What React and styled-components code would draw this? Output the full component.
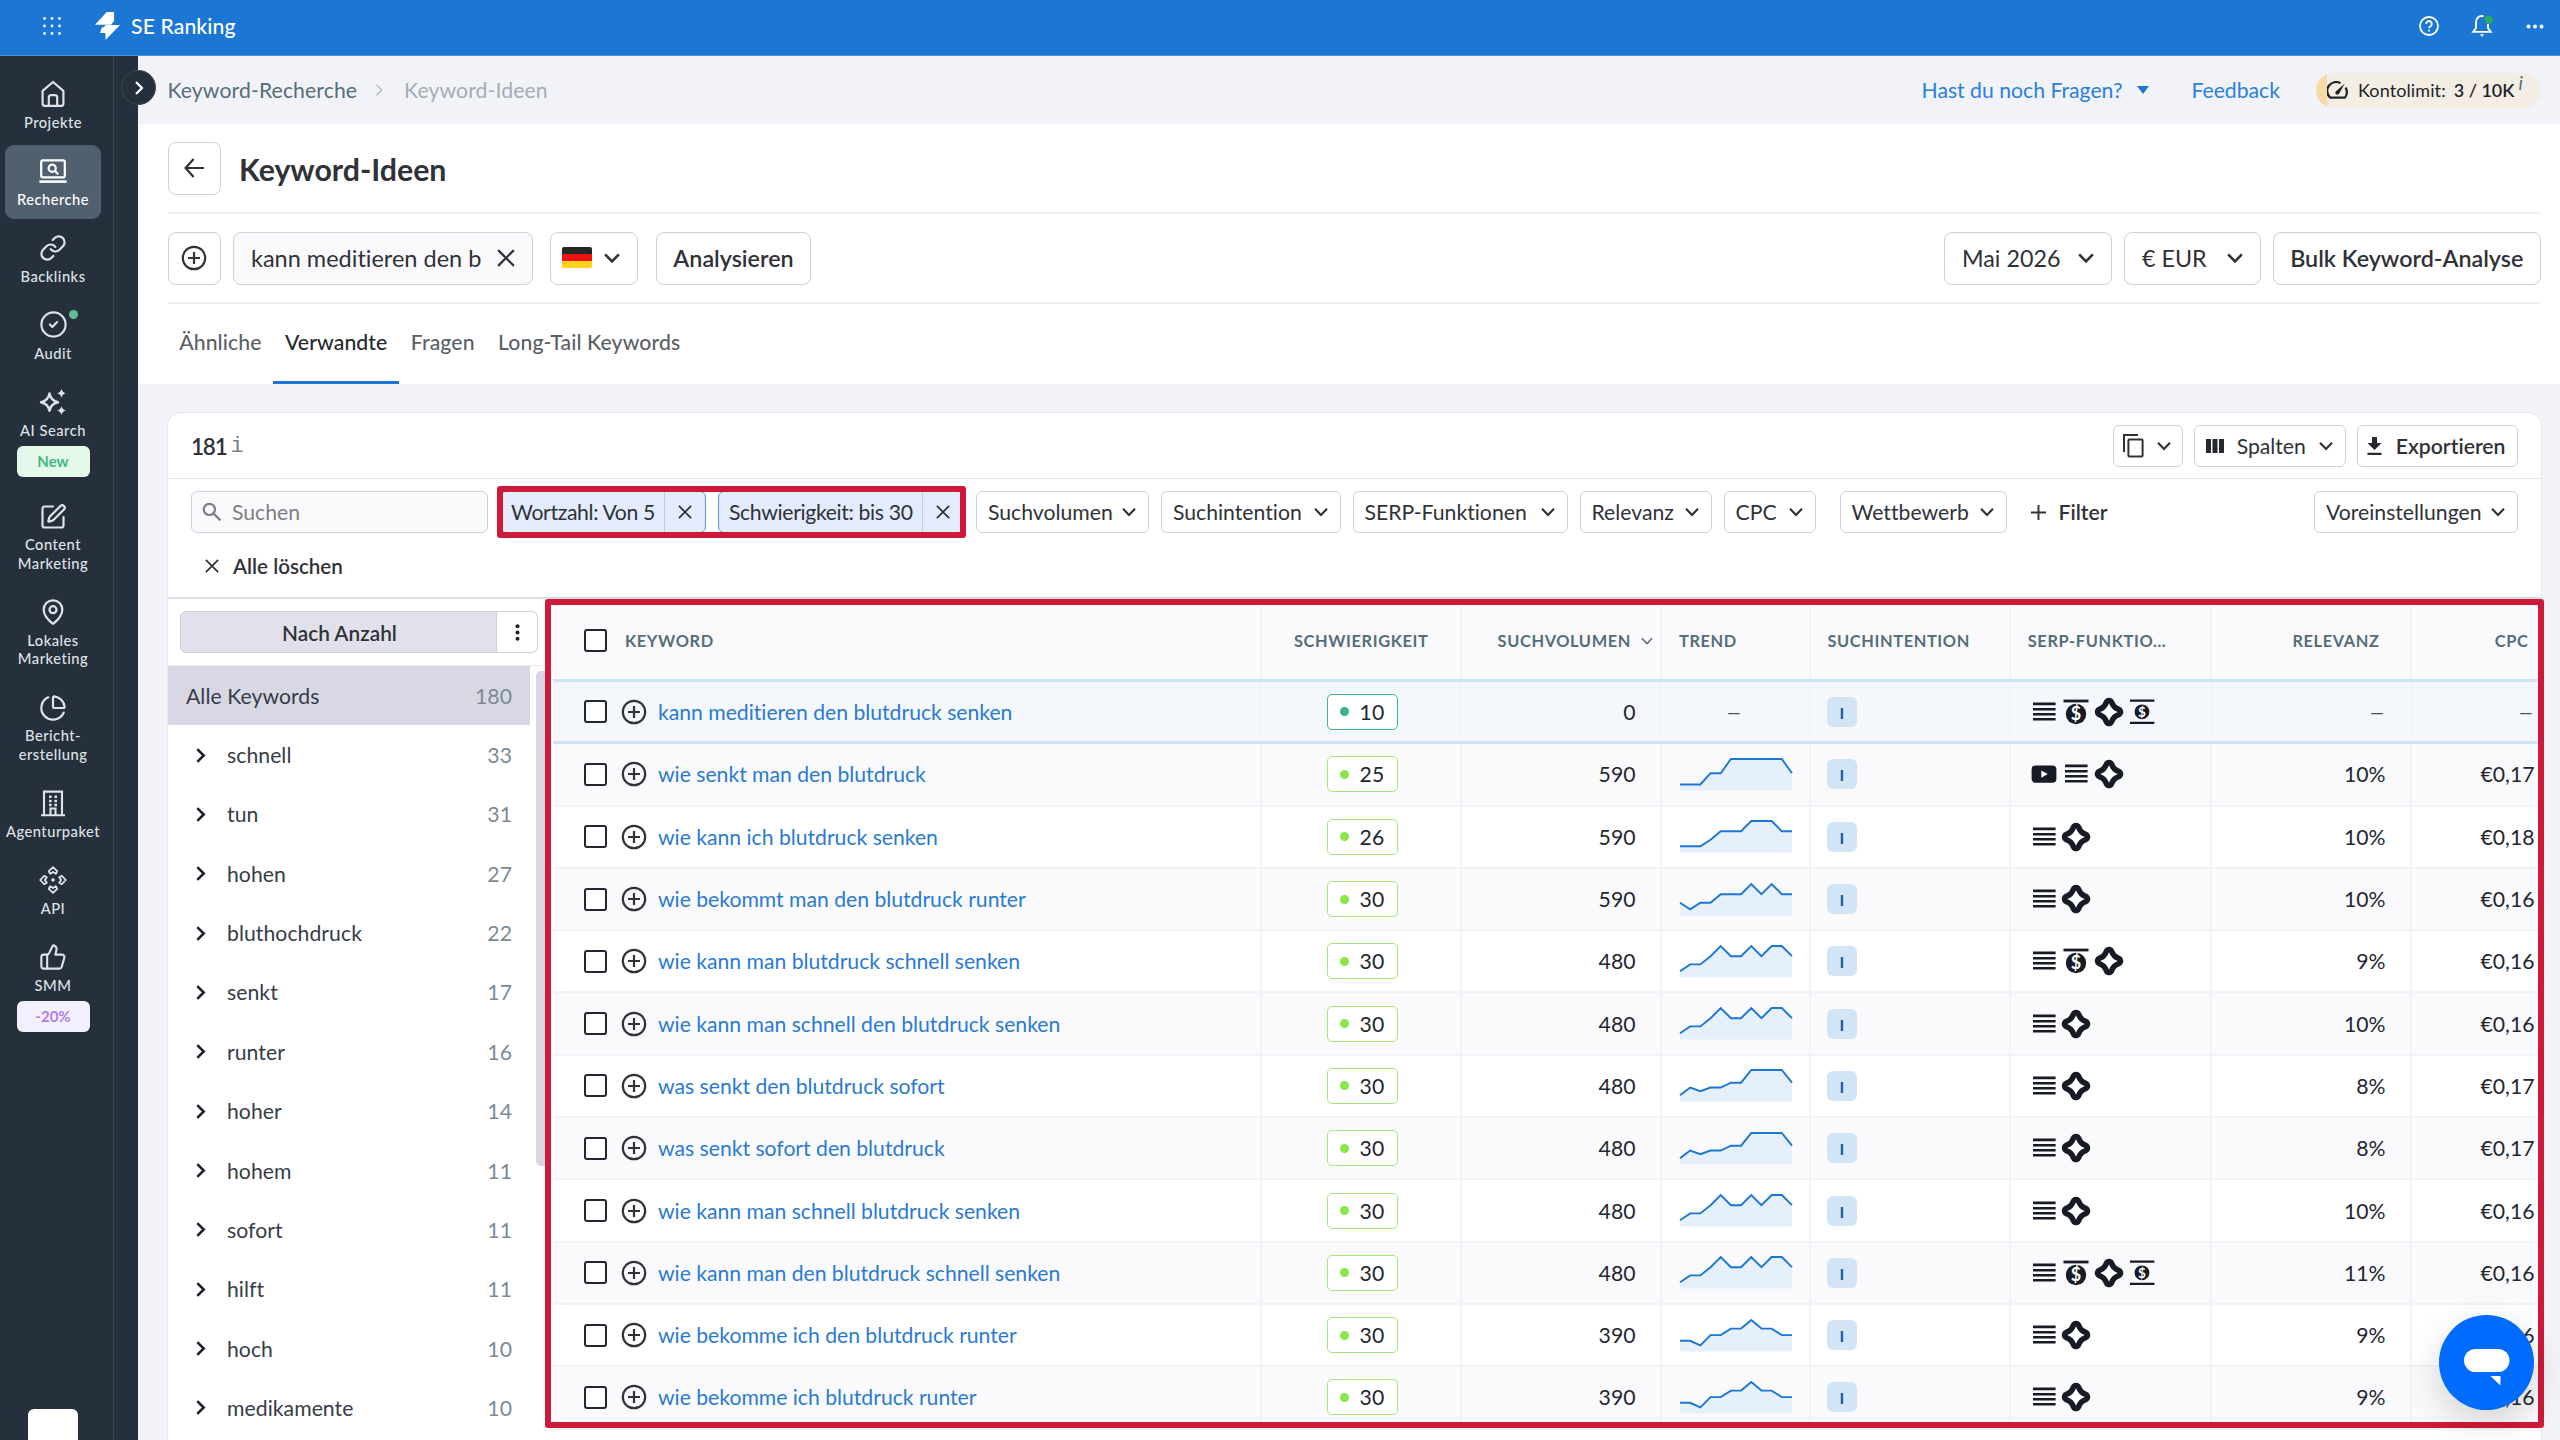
import React from 'react';
import styled, { createGlobalStyle, css } from 'styled-components';
import { Link, CircleCheck, MapPin, ChartPie, ThumbsUp, SquarePen } from 'lucide-react';

//Styles
const colors = {
	topBar: '#1b76d4',
	dark: '#26303c',
	darkActive: '#51606f',
	page: '#f2f3f8',
	line: '#f0f0f6',
	border: '#cfcfdc',
	text: '#2f3237',
	slate: '#546e7a',
	link: '#2a7ad2',
	red: '#ce1a3a',
	blueLine: '#cfe2f6',
};

const GlobalStyle = createGlobalStyle`
	* { box-sizing: border-box; }
	body {
		margin: 0;
		overflow: hidden;
		font-family: Lato, "Noto Sans", sans-serif;
		font-variant-ligatures: none;
		font-size: 21.2px;
		color: ${colors.text};
		background: ${colors.page};
	}
	svg { display: block; flex: none; }
`;

//Data
const keywords = [
	['kann meditieren den blutdruck senken', 10, '0', null, 'ltsb', '–', '–'],
	['wie senkt man den blutdruck', 25, '590', [25.5, 25.5, 25.5, 14.2, 14.2, 0, 0, 0, 0, 0, 0, 14.2], 'yls', '10%', '€0,17'],
	['wie kann ich blutdruck senken', 26, '590', [25.3, 25.3, 25.3, 18.8, 10.2, 10.2, 10.2, 0, 0, 0, 10.2, 10.2], 'ls', '10%', '€0,18'],
	['wie bekommt man den blutdruck runter', 30, '590', [18.8, 25.3, 18.8, 18.8, 10.2, 10.2, 10.2, 0, 10.2, 0, 10.2, 10.2], 'ls', '10%', '€0,16'],
	['wie kann man blutdruck schnell senken', 30, '480', [25.3, 18.4, 18.4, 10.2, 0, 10.2, 10.2, 0, 10.2, 0, 0, 10.2], 'lts', '9%', '€0,16'],
	['wie kann man schnell den blutdruck senken', 30, '480', [25.3, 18.4, 18.4, 10.2, 0, 10.2, 10.2, 0, 10.2, 0, 0, 10.2], 'ls', '10%', '€0,16'],
	['was senkt den blutdruck sofort', 30, '480', [25.3, 17.5, 21.2, 17.5, 17.5, 12.7, 12.7, 0, 0, 0, 0, 12.7], 'ls', '8%', '€0,17'],
	['was senkt sofort den blutdruck', 30, '480', [25.3, 17.5, 21.2, 17.5, 17.5, 12.7, 12.7, 0, 0, 0, 0, 12.7], 'ls', '8%', '€0,17'],
	['wie kann man schnell blutdruck senken', 30, '480', [25.3, 18.4, 18.4, 10.2, 0, 10.2, 10.2, 0, 10.2, 0, 0, 10.2], 'ls', '10%', '€0,16'],
	['wie kann man den blutdruck schnell senken', 30, '480', [25.3, 18.4, 18.4, 10.2, 0, 10.2, 10.2, 0, 10.2, 0, 0, 10.2], 'ltsb', '11%', '€0,16'],
	['wie bekomme ich den blutdruck runter', 30, '390', [20.8, 20.8, 25.3, 15.1, 15.1, 8.6, 8.6, 0, 8.6, 8.6, 15.1, 15.1], 'ls', '9%', '€0,16'],
	['wie bekomme ich blutdruck runter', 30, '390', [20.8, 20.8, 25.3, 15.1, 15.1, 8.6, 8.6, 0, 8.6, 8.6, 15.1, 15.1], 'ls', '9%', '€0,16'],
];

const groups = [
	['schnell', 33],
	['tun', 31],
	['hohen', 27],
	['bluthochdruck', 22],
	['senkt', 17],
	['runter', 16],
	['hoher', 14],
	['hohem', 11],
	['sofort', 11],
	['hilft', 11],
	['hoch', 10],
	['medikamente', 10],
];

//Icons
const Chevron = ({ size = 14, stroke = 2.2, dir = 'down', color = 'currentColor' }) => (
	<svg width={size} height={size} viewBox="0 0 14 14" fill="none" stroke={color} strokeWidth={stroke}>
		<path d={dir === 'down' ? 'M1 3.8 7 10l6-6.2' : 'M4 1l6 6-6 6'} />
	</svg>
);

const Cross = ({ size = 17, stroke = 2 }) => (
	<svg width={size} height={size} viewBox="0 0 16 16" fill="none" stroke="#2f3237" strokeWidth={stroke}>
		<path d="M1 1l14 14M15 1L1 15" />
	</svg>
);

const PlusCircle = () => (
	<svg width="26" height="26" viewBox="0 0 26 26" fill="none" stroke="#2f3237" strokeWidth="2.2">
		<circle cx="13" cy="13" r="11.2" />
		<path d="M13 7v12M7 13h12" />
	</svg>
);

const HomeIcon = () => (
	<svg width="28" height="28" viewBox="0 0 28 28" fill="none" stroke="currentColor" strokeWidth="2.2" strokeLinejoin="round">
		<path d="M3.6 10.8 14 2l10.4 8.8v13a2 2 0 0 1-2 2H5.6a2 2 0 0 1-2-2z" />
		<path d="M9.8 25.6v-8a2.4 2.4 0 0 1 2.4-2.4h3.6a2.4 2.4 0 0 1 2.4 2.4v8" />
	</svg>
);

const ResearchIcon = () => (
	<svg width="28" height="28" viewBox="0 0 28 28" fill="none" stroke="currentColor" strokeWidth="2.2">
		<rect x="2.2" y="3.4" width="23.6" height="17" rx="1.6" />
		<path d="M.4 24.6h27.2" strokeWidth="2.6" />
		<circle cx="13.2" cy="11.2" r="3.6" />
		<path d="M15.8 13.8l3.4 3.4" />
	</svg>
);

const AiIcon = () => (
	<svg width="28" height="28" viewBox="0 0 28 28" fill="currentColor">
		<path d="M10.5 5.5Q11.8 12.8 19 14.2Q11.8 15.6 10.5 22.8Q9.2 15.6 2 14.2Q9.2 12.8 10.5 5.5z" fill="none" stroke="currentColor" strokeWidth="2.4" strokeLinejoin="round" />
		<path d="M22.5 .8q.8 3.7 4.5 4.5q-3.7 .8-4.5 4.5q-.8-3.7-4.5-4.5q3.7-.8 4.5-4.5z" />
		<path d="M22.5 18q.8 3.7 4.5 4.5q-3.7 .8-4.5 4.5q-.8-3.7-4.5-4.5q3.7-.8 4.5-4.5z" />
	</svg>
);

const AgencyIcon = () => (
	<svg width="28" height="28" viewBox="0 0 28 28" fill="none" stroke="currentColor" strokeWidth="2.1">
		<path d="M5 26V2.6h18V26M2 26.2h24M11.5 26v-6.5h5V26" />
		<path d="M10 7.8h2.6M15.4 7.8H18M10 12h2.6M15.4 12H18M10 16h2.6M15.4 16H18" strokeWidth="2.4" />
	</svg>
);

const ApiIcon = () => (
	<svg width="30" height="30" viewBox="0 0 30 30" fill="none" stroke="currentColor" strokeWidth="1.8" strokeLinejoin="round">
		{[0, 90, 180, 270].map((a) => (
			<path key={a} transform={`rotate(${a} 15 15)`} d="M10.8 6.2 15 2.2l4.2 4-1.4 2.6L15 6.9l-2.8 1.9z" />
		))}
		<circle cx="15" cy="15" r="1.8" fill="currentColor" stroke="none" />
	</svg>
);

const SearchIcon = () => (
	<svg width="20" height="20" viewBox="0 0 20 20" fill="none" stroke="#7d7f86" strokeWidth="2.2">
		<circle cx="7.4" cy="7.4" r="5.6" />
		<path d="M11.6 11.6l6.8 6.8" />
	</svg>
);

const ListIcon = () => (
	<svg width="28" height="30" viewBox="0 0 28 30" fill="#161b26">
		<path d="M3 5.6h22.6v2.6H3zM3 11h22.6v2.6H3zM3 16h22.6v2.6H3zM3 21h22.6v2.6H3z" />
	</svg>
);

const TopAdsIcon = () => (
	<svg width="28" height="30" viewBox="0 0 28 30">
		<path d="M1.5 2.6h25v2.8h-25z" fill="#161b26" />
		<circle cx="14" cy="17" r="10.2" fill="#161b26" />
		<text x="14" y="23.4" textAnchor="middle" fontSize="18" fontWeight="700" fill="#fff">$</text>
	</svg>
);

const BottomAdsIcon = () => (
	<svg width="28" height="30" viewBox="0 0 28 30">
		<path d="M2 2.6h24.4v2.2H2zM2 24.8h24.4V27H2z" fill="#161b26" />
		<circle cx="14" cy="14.8" r="7.4" fill="#161b26" />
		<text x="14" y="19.6" textAnchor="middle" fontSize="13.5" fontWeight="700" fill="#fff">$</text>
	</svg>
);

const starPath = 'M14 6.2Q16.3 12.7 22.8 15Q16.3 17.3 14 23.8Q11.7 17.3 5.2 15Q11.7 12.7 14 6.2z';

const OverviewIcon = () => (
	<svg width="28" height="30" viewBox="0 0 28 30" overflow="visible">
		<path d={starPath} fill="#161b26" stroke="#161b26" strokeWidth="11" strokeLinejoin="round" />
		<path d={starPath} fill="#fff" />
	</svg>
);

const VideoIcon = () => (
	<svg width="28" height="30" viewBox="0 0 28 30">
		<rect x="1.6" y="6.4" width="24.8" height="17.4" rx="4" fill="#161b26" />
		<path d="M11.3 11.5v7.2l6.4-3.6z" fill="#fff" />
	</svg>
);

const serpIcons = { l: ListIcon, t: TopAdsIcon, s: OverviewIcon, b: BottomAdsIcon, y: VideoIcon };

function Trend({ points }) {
	const coords = points.map((p, i) => `${(i * 112) / 11},${p + 1}`);
	return (
		<svg width="112" height="33" viewBox="0 0 112 33" overflow="visible">
			<path d={`M0,32.5L${coords.join('L')}L112,32.5z`} fill="#e6f0fa" />
			<path d={`M${coords.join('L')}`} fill="none" stroke="#1b76d4" strokeWidth="1.9" />
		</svg>
	);
}

function TopBar() {
	return (
		<TopBarWrapper>
			<svg width="18" height="18" viewBox="0 0 18 18" fill="#fff">
				{[1.5, 9, 16.5].map((x) => [1.5, 9, 16.5].map((y) => <circle key={`${x}-${y}`} cx={x} cy={y} r="1.4" />))}
			</svg>
			<Brand>
				<svg width="25" height="28" viewBox="0 0 25 28" fill="#fff">
					<path d="M12.5 0h5.8q.8 0 .8 .8v8.2l-3 3.8H0L11 .8q.7-.8 1.5-.8z" />
					<path d="M7 15.2h1.5L11 13h14L10.5 28v-7H5z" />
				</svg>
				SE Ranking
			</Brand>
			<TopBarActions>
				<svg width="20" height="20" viewBox="0 0 20 20" fill="none" stroke="#fff" strokeWidth="1.8">
					<circle cx="10" cy="10" r="9" />
					<path d="M7.2 7.9a2.8 2.8 0 1 1 4.3 2.3c-.9.6-1.5 1-1.5 2.1M10 13.7v1.9" />
				</svg>
				<svg width="24" height="24" viewBox="0 0 24 24" fill="none" stroke="#fff" strokeWidth="1.9">
					<path d="M13.5 2.2C8.5 1.2 6 4.5 6 8.5v5.5L3.2 17.9h17.6L18 14v-4" />
					<path d="M10 20.2h4l-2 2.8z" fill="#fff" stroke="none" />
					<circle cx="18.8" cy="5.8" r="4.2" fill="#25ae60" stroke="none" />
				</svg>
				<svg width="18" height="5" viewBox="0 0 18 5" fill="#fff">
					<circle cx="2.5" cy="2.5" r="2" />
					<circle cx="9" cy="2.5" r="2" />
					<circle cx="15.5" cy="2.5" r="2" />
				</svg>
			</TopBarActions>
		</TopBarWrapper>
	);
}

const navItems = [
	{ label: ['Projekte'], icon: <HomeIcon /> },
	{ label: ['Recherche'], icon: <ResearchIcon />, active: true },
	{ label: ['Backlinks'], icon: <Link size={28} strokeWidth={1.9} /> },
	{ label: ['Audit'], icon: <CircleCheck size={29} strokeWidth={1.8} />, dot: true },
	{ label: ['AI Search'], icon: <AiIcon />, badge: 'New', tone: 'green' },
	{ label: ['Content', 'Marketing'], icon: <SquarePen size={28} strokeWidth={1.9} /> },
	{ label: ['Lokales', 'Marketing'], icon: <MapPin size={28} strokeWidth={1.9} /> },
	{ label: ['Bericht-', 'erstellung'], icon: <ChartPie size={28} strokeWidth={1.9} /> },
	{ label: ['Agenturpaket'], icon: <AgencyIcon /> },
	{ label: ['API'], icon: <ApiIcon /> },
	{ label: ['SMM'], icon: <ThumbsUp size={28} strokeWidth={1.8} />, badge: '-20%', tone: 'violet' },
];

function Sidebar() {
	return (
		<SidebarWrapper>
			<Nav>
				{navItems.map((item) => (
					<NavItem key={item.label.join('')} $active={item.active}>
						<NavIcon>
							{item.icon}
							{item.dot && <NavDot />}
						</NavIcon>
						{item.label.map((l) => (
							<NavLabel key={l}>{l}</NavLabel>
						))}
						{item.badge && <NavBadge $tone={item.tone}>{item.badge}</NavBadge>}
					</NavItem>
				))}
				<NavFooterBox />
			</Nav>
			<SidebarToggle>
				<Chevron dir="right" size={14} color="#fff" />
			</SidebarToggle>
		</SidebarWrapper>
	);
}

function PageHeader() {
	return (
		<React.Fragment>
			<Breadcrumbs>
				<Crumb>Keyword-Recherche</Crumb>
				<Chevron dir="right" size={12} stroke={1.6} color="#b4bac2" />
				<Crumb $muted>Keyword-Ideen</Crumb>
				<CrumbLinks>
					<HelpLink>
						Hast du noch Fragen?
						<svg width="12" height="8" viewBox="0 0 12 8" fill="#1b76d4">
							<path d="M0 0h12L6 8z" />
						</svg>
					</HelpLink>
					<HelpLink>Feedback</HelpLink>
					<LimitPill>
						<svg width="21" height="19" viewBox="0 0 21 19" fill="none" stroke="#1f242b" strokeWidth="2.2">
							<path d="M13.5 2.2A8.9 8.9 0 0 0 3.2 16.6h14.6A8.9 8.9 0 0 0 18.6 6.6" />
							<path d="M8.7 10.5 17.8 2.6 12 12.8a2 2 0 1 1-3.3-2.3z" fill="#1f242b" stroke="none" />
						</svg>
						<span>Kontolimit:</span>
						<b>3 / 10K</b>
						<LimitInfo>i</LimitInfo>
					</LimitPill>
				</CrumbLinks>
			</Breadcrumbs>
			<HeaderPanel>
				<TitleRow>
					<Button $w={53.5} $large>
						<svg width="20" height="20" viewBox="0 0 20 20" fill="none" stroke="#2f3237" strokeWidth="2.2">
							<path d="M20 10H1.6M9.6 1 1.6 10l8 9" />
						</svg>
					</Button>
					<Title>Keyword-Ideen</Title>
				</TitleRow>
				<QueryRow>
					<Button $w={53.5} $large>
						<PlusCircle />
					</Button>
					<QueryInput>
						<QueryText>kann meditieren den b</QueryText>
						<Cross size={18} />
					</QueryInput>
					<Button $w={88} $large $between>
						<Flag />
						<Chevron size={16} />
					</Button>
					<Button $w={155} $large $medium>
						Analysieren
					</Button>
					<Spacer />
					<Button $w={168} $large $between>
						Mai 2026
						<Chevron size={16} />
					</Button>
					<Button $w={136.5} $large $between>
						€ EUR
						<Chevron size={16} />
					</Button>
					<Button $w={268.5} $large $medium>
						Bulk Keyword-Analyse
					</Button>
				</QueryRow>
				<Tabs>
					<Tab>Ähnliche</Tab>
					<Tab $active>Verwandte</Tab>
					<Tab>Fragen</Tab>
					<Tab>Long-Tail Keywords</Tab>
				</Tabs>
			</HeaderPanel>
		</React.Fragment>
	);
}

function Filters() {
	return (
		<FiltersWrapper>
			<FilterRow>
				<SearchInput>
					<SearchIcon />
					Suchen
				</SearchInput>
				<ChipGroup>
					<Chip $w={206}>
						<ChipText>Wortzahl: Von 5</ChipText>
						<ChipClose>
							<Cross size={14} />
						</ChipClose>
					</Chip>
					<Chip $w={246}>
						<ChipText>Schwierigkeit: bis 30</ChipText>
						<ChipClose>
							<Cross size={14} />
						</ChipClose>
					</Chip>
				</ChipGroup>
				{[
					['Suchvolumen', 173],
					['Suchintention', 179.5],
					['SERP-Funktionen', 215],
					['Relevanz', 132],
					['CPC', 92],
				].map(([label, w]) => (
					<Button key={label} $w={w} $between>
						{label}
						<Chevron />
					</Button>
				))}
				<WideGap />
				<Button $w={167} $between>
					Wettbewerb
					<Chevron />
				</Button>
				<AddFilter>
					<svg width="15" height="15" viewBox="0 0 15 15" fill="none" stroke="#2f3237" strokeWidth="1.9">
						<path d="M7.5 0v15M0 7.5h15" />
					</svg>
					Filter
				</AddFilter>
				<Spacer />
				<Button $w={203.5} $between>
					Voreinstellungen
					<Chevron />
				</Button>
			</FilterRow>
			<ClearAll>
				<Cross size={14} />
				Alle löschen
			</ClearAll>
		</FiltersWrapper>
	);
}

function GroupPanel() {
	return (
		<GroupPanelWrapper>
			<GroupHead>
				<GroupSwitch>Nach Anzahl</GroupSwitch>
				<GroupMore>
					<svg width="5" height="17" viewBox="0 0 5 17" fill="#1f2329">
						<circle cx="2.5" cy="2.2" r="2" />
						<circle cx="2.5" cy="8.5" r="2" />
						<circle cx="2.5" cy="14.8" r="2" />
					</svg>
				</GroupMore>
			</GroupHead>
			<GroupBody>
				<GroupList>
					<GroupItem $active>
						Alle Keywords
						<GroupCount>180</GroupCount>
					</GroupItem>
					{groups.map(([name, count]) => (
						<GroupItem key={name}>
							<Chevron dir="right" size={15} stroke={2.4} color="#1a1f2b" />
							<GroupName>{name}</GroupName>
							<GroupCount>{count}</GroupCount>
						</GroupItem>
					))}
				</GroupList>
				<ScrollThumb />
			</GroupBody>
		</GroupPanelWrapper>
	);
}

function KeywordTable() {
	return (
		<TableWrapper>
			<TableHead>
				<Cell $pad={30.5} $gap={18.5}>
					<Checkbox />
					<span>Keyword</span>
				</Cell>
				<Cell $align="center">Schwierigkeit</Cell>
				<Cell $align="flex-end" $padRight={7.5} $gap={10}>
					Suchvolumen
					<Chevron size={12} stroke={1.8} />
				</Cell>
				<Cell $pad={16.5}>Trend</Cell>
				<Cell $pad={16.5}>Suchintention</Cell>
				<Cell $pad={16.5}>SERP-Funktio…</Cell>
				<Cell $align="flex-end" $padRight={31}>Relevanz</Cell>
				<Cell $align="flex-end" $padRight={12}>CPC</Cell>
			</TableHead>
			{keywords.map(([name, difficulty, volume, trend, serp, relevance, cpc], index) => (
				<TableRow key={name} $first={index === 0} $striped={index % 2 === 1}>
					<Cell $pad={30.5} $gap={14}>
						<Checkbox />
						<PlusCircle />
						<KeywordLink>{name}</KeywordLink>
					</Cell>
					<Cell $align="center" $pad={2}>
						<Difficulty $easy={difficulty <= 20}>
							<DifficultyDot $easy={difficulty <= 20} />
							{difficulty}
						</Difficulty>
					</Cell>
					<Cell $align="flex-end" $padRight={25}>{volume}</Cell>
					{trend ? (
						<Cell $pad={18}>
							<Trend points={trend} />
						</Cell>
					) : (
						<Cell $align="center">
							<Empty>–</Empty>
						</Cell>
					)}
					<Cell $pad={16}>
						<Intent>I</Intent>
					</Cell>
					<Cell $pad={18.5} $gap={4.7}>
						{serp.split('').map((key) => {
							const Icon = serpIcons[key];
							return <Icon key={key} />;
						})}
					</Cell>
					<Cell $align="flex-end" $padRight={25}>
						{relevance === '–' ? <Empty>–</Empty> : relevance}
					</Cell>
					<Cell $align="flex-end" $padRight={6}>
						{cpc === '–' ? <Empty>–</Empty> : cpc}
					</Cell>
				</TableRow>
			))}
			<TableHighlight />
		</TableWrapper>
	);
}

function App() {
	return (
		<Page>
			<GlobalStyle />
			<TopBar />
			<Body>
				<Sidebar />
				<Main>
					<PageHeader />
					<Card>
						<CardHeader>
							<Count>181</Count>
							<CountInfo>i</CountInfo>
							<Spacer />
							<Button $w={70.5} $between $tight>
								<svg width="21" height="24" viewBox="0 0 21 24" fill="none" stroke="#2f3237" strokeWidth="2">
									<path d="M1 18V1h14" />
									<rect x="5.4" y="5.4" width="14.2" height="17" rx="1" />
								</svg>
								<Chevron />
							</Button>
							<Button $w={151.5} $between>
								<svg width="18" height="14" viewBox="0 0 18 14" fill="#25282d">
									<path d="M0 0h5v14H0zM6.5 0h5v14h-5zM13 0h5v14h-5z" />
								</svg>
								Spalten
								<Chevron />
							</Button>
							<Button $w={161} $medium $between $tight>
								<svg width="15" height="18" viewBox="0 0 15 18" fill="#25282d">
									<path d="M5 0h5v6h4.5l-7 7-7-7H5zM.5 15.7h14V18H.5z" />
								</svg>
								Exportieren
							</Button>
						</CardHeader>
						<Filters />
						<CardBody>
							<GroupPanel />
							<KeywordTable />
						</CardBody>
					</Card>
				</Main>
			</Body>
			<ChatButton>
				<svg width="46" height="37" viewBox="0 0 46 37" fill="#fff">
					<rect width="45.5" height="23" rx="11.5" />
					<path d="M26.3 27H36.5v9.5z" />
				</svg>
			</ChatButton>
		</Page>
	);
}

export default App;

const Page = styled.div`
	display: flex;
	flex-direction: column;
	width: 2560px;
	height: 1440px;
	overflow: hidden;
`;

const TopBarWrapper = styled.header`
	display: flex;
	align-items: center;
	flex: none;
	height: 56px;
	padding: 0 16px 3px 43px;
	background: ${colors.topBar};
	border-bottom: 1px solid #4d94de;
	color: #fff;
`;

const Brand = styled.div`
	display: flex;
	align-items: center;
	gap: 11.5px;
	margin-left: 33.5px;
	font-weight: 500;
	letter-spacing: 0.1px;
`;

const TopBarActions = styled.div`
	display: flex;
	align-items: center;
	gap: 31px;
	margin-left: auto;

	svg:last-child {
		margin-left: 1px;
	}
`;

const Body = styled.div`
	display: flex;
	flex: 1;
	min-height: 0;
`;

const SidebarWrapper = styled.aside`
	position: relative;
	flex: none;
	width: 138px;
	background: ${colors.dark};
`;

const Nav = styled.nav`
	display: flex;
	flex-direction: column;
	width: 114px;
	height: 100%;
	padding: 12px 12px 0 5px;
	border-right: 1px solid #3a4551;
`;

const NavItem = styled.div`
	display: flex;
	flex-direction: column;
	align-items: center;
	margin-bottom: 3px;
	padding: 12px 0 10.9px;
	border-radius: 9px;
	color: #dfe2e6;

	${(props) =>
		props.$active &&
		css`
			background: ${colors.darkActive};
			color: #fff;
		`}
`;

const NavIcon = styled.div`
	position: relative;
	display: flex;
	align-items: center;
	justify-content: center;
	height: 28px;
	margin-bottom: 4.6px;
`;

const NavDot = styled.i`
	position: absolute;
	top: -1px;
	right: -10px;
	width: 9px;
	height: 9px;
	border-radius: 50%;
	background: #5fbf8f;
`;

const NavLabel = styled.span`
	font-size: 14.7px;
	line-height: 18.5px;
	font-weight: 500;
	letter-spacing: 0.5px;
	white-space: nowrap;
`;

const NavBadge = styled.span`
	width: 73px;
	margin-top: 6.9px;
	border-radius: 6px;
	font-size: 15px;
	line-height: 31px;
	font-weight: 700;
	text-align: center;
	background: ${(props) => (props.$tone === 'green' ? '#e4f9ea' : '#f3f1fe')};
	color: ${(props) => (props.$tone === 'green' ? '#41b883' : '#b57bea')};
`;

const NavFooterBox = styled.div`
	flex: none;
	width: 50px;
	height: 31px;
	margin: auto auto 0 23px;
	border-radius: 6px 6px 0 0;
	background: #fff;
`;

const SidebarToggle = styled.div`
	position: absolute;
	top: 14px;
	right: -18px;
	display: flex;
	align-items: center;
	justify-content: center;
	width: 35px;
	height: 35px;
	border: 1px solid #3a4551;
	border-radius: 50%;
	background: ${colors.dark};
	z-index: 2;
`;

const Main = styled.main`
	display: flex;
	flex-direction: column;
	flex: 1;
	min-width: 0;
`;

const Breadcrumbs = styled.div`
	display: flex;
	align-items: center;
	flex: none;
	height: 68px;
	padding: 0 19px 0 29.5px;
	gap: 16px;
	letter-spacing: 0.1px;
`;

const Crumb = styled.span`
	color: ${(props) => (props.$muted ? '#a3adb5' : colors.slate)};
	margin-left: ${(props) => (props.$muted ? '3px' : 0)};
`;

const CrumbLinks = styled.div`
	display: flex;
	align-items: center;
	gap: 35px;
	margin-left: auto;
`;

const HelpLink = styled.a`
	display: flex;
	align-items: center;
	gap: 15px;
	margin-right: 7px;
	color: #2a80de;
	letter-spacing: 0;

	& + & {
		margin-right: 1px;
	}
`;

const LimitPill = styled.div`
	display: flex;
	align-items: center;
	width: 225px;
	height: 35px;
	padding-left: 11px;
	border-radius: 18px;
	background: linear-gradient(90deg, #f6dba6 11px, #f4ede4 11px);
	color: #1f242b;
	font-size: 18px;
	letter-spacing: 0;

	span {
		margin: 0 8px 0 10px;
		letter-spacing: 0.1px;
	}

	b {
		font-weight: 600;
	}
`;

const LimitInfo = styled.i`
	margin: -16px 0 0 4px;
	color: ${colors.slate};
	font-size: 19px;
`;

const HeaderPanel = styled.section`
	flex: none;
	height: 260px;
	padding: 0 19px 0 29.5px;
	background: #fff;
`;

const TitleRow = styled.div`
	display: flex;
	align-items: center;
	gap: 18px;
	height: 90px;
	border-bottom: 2px solid ${colors.line};
`;

const Title = styled.h1`
	margin: 2px 0 0;
	font-size: 30.3px;
	font-weight: 700;
`;

const Button = styled.div`
	display: flex;
	align-items: center;
	justify-content: ${(props) => (props.$between ? 'space-between' : 'center')};
	flex: none;
	width: ${(props) => props.$w}px;
	height: 42px;
	padding: ${(props) => (props.$between ? (props.$tight ? '0 11px 0 9px' : '0 12px 0 11px') : 0)};
	border: 1.5px solid ${colors.border};
	border-radius: 6px;
	background: #fff;
	font-weight: ${(props) => (props.$medium ? 600 : 400)};
	white-space: nowrap;

	${(props) =>
		props.$large &&
		css`
			height: 53px;
			padding: ${props.$between ? '0 17px' : 0};
			border-radius: 8px;
			font-size: 23.3px;
		`}
`;

const QueryRow = styled.div`
	display: flex;
	align-items: center;
	gap: 12px;
	height: 90px;
	border-bottom: 2px solid ${colors.line};
`;

const QueryInput = styled.div`
	display: flex;
	align-items: center;
	justify-content: space-between;
	width: 300px;
	height: 53px;
	margin-right: 5px;
	padding: 0 17px;
	border: 1.5px solid ${colors.border};
	border-radius: 8px;
	background: #fafafd;
	font-size: 23.5px;

	& + ${Button} {
		margin-right: 6px;
		padding: 0 17px 0 11px;
	}
`;

const QueryText = styled.span`
	white-space: nowrap;
`;

const Flag = styled.i`
	width: 30px;
	height: 21px;
	margin-top: -2px;
	border-radius: 2px;
	background: linear-gradient(#262626 33.3%, #f0120f 33.3% 66.6%, #ffd21f 66.6%);
`;

const Spacer = styled.div`
	flex: 1;
`;

const Tabs = styled.div`
	display: flex;
	height: 80px;
`;

const Tab = styled.div`
	padding: 0 11.7px;
	line-height: 77px;
	font-weight: 500;
	letter-spacing: 0.1px;
	color: ${(props) => (props.$active ? '#26292e' : '#5b5f66')};
	box-shadow: ${(props) => (props.$active ? `inset 0 -3px ${colors.topBar}` : 'none')};
`;

const Card = styled.section`
	display: flex;
	flex-direction: column;
	flex: 1;
	min-height: 0;
	margin: 28px 18px 0 29px;
	border: 1px solid #e6e6ef;
	border-bottom: 0;
	border-radius: 14px 14px 0 0;
	background: #fff;
`;

const CardHeader = styled.div`
	display: flex;
	align-items: center;
	flex: none;
	gap: 11px;
	height: 66px;
	padding: 0 23.5px 0 23px;
	border-bottom: 1px solid #e3e3ee;
`;

const Count = styled.span`
	margin-top: 1px;
	font-size: 22.5px;
	font-weight: 600;
	letter-spacing: -1.2px;
`;

const CountInfo = styled.span`
	margin: 1px 0 0 -7px;
	font-family: 'Liberation Mono', monospace;
	font-size: 22px;
	color: #7d7f86;
`;

const FiltersWrapper = styled.div`
	flex: none;
	height: 120px;
	padding: 12px 23.5px 0 23px;
	border-bottom: 2px solid #dedee2;
`;

const FilterRow = styled.div`
	display: flex;
	align-items: center;
	gap: 12px;
`;

const SearchInput = styled.div`
	display: flex;
	align-items: center;
	gap: 10px;
	width: 297px;
	height: 42px;
	padding-left: 10px;
	border: 1.5px solid ${colors.border};
	border-radius: 6px;
	background: #fafafd;
	color: #7d7f86;
`;

const ChipGroup = styled.div`
	position: relative;
	display: flex;
	gap: 12px;

	&::after {
		content: '';
		position: absolute;
		inset: -5px -2px -5px -3px;
		border: 6px solid ${colors.red};
		border-radius: 3px;
	}
`;

const Chip = styled.div`
	display: flex;
	width: ${(props) => props.$w}px;
	height: 42px;
	border: 1.5px solid #5b93ea;
	border-radius: 6px;
	background: #e4ebfd;
`;

const ChipText = styled.span`
	flex: 1;
	padding-left: 10px;
	line-height: 40px;
	letter-spacing: -0.35px;
	white-space: nowrap;
`;

const ChipClose = styled.span`
	display: flex;
	align-items: center;
	justify-content: center;
	width: 41px;
	border-left: 1px solid #c4cce0;
`;

const WideGap = styled.div`
	width: 0;
`;

const AddFilter = styled.div`
	display: flex;
	align-items: center;
	gap: 13px;
	margin-left: 12px;
	font-weight: 600;
`;

const ClearAll = styled.div`
	display: flex;
	align-items: center;
	gap: 14px;
	height: 42px;
	margin: 12px 0 0 14px;
	font-size: 20.6px;
	font-weight: 600;
`;

const CardBody = styled.div`
	display: flex;
	flex: 1;
	min-height: 0;
`;

const GroupPanelWrapper = styled.div`
	flex: none;
	width: 385px;
`;

const GroupHead = styled.div`
	display: flex;
	height: 67px;
	padding: 12px 15px 12px 12px;
	border-bottom: 1px solid #ececf3;
`;

const GroupSwitch = styled.div`
	flex: 1;
	padding-left: 2px;
	border: 1.5px solid ${colors.border};
	border-radius: 6px 0 0 6px;
	background: #e1e1ec;
	line-height: 42px;
	font-size: 20.8px;
	font-weight: 600;
	text-align: center;
`;

const GroupMore = styled.div`
	display: flex;
	align-items: center;
	justify-content: center;
	width: 41px;
	border: 1.5px solid ${colors.border};
	border-left: 0;
	border-radius: 0 6px 6px 0;
`;

const GroupBody = styled.div`
	display: flex;
	gap: 6px;
`;

const GroupList = styled.div`
	width: 362px;
`;

const GroupItem = styled.div`
	display: flex;
	align-items: center;
	height: 59.37px;
	padding: 0 18px 0 ${(props) => (props.$active ? 18 : 25)}px;
	background: ${(props) => (props.$active ? '#d8d8e4' : 'transparent')};
	color: #363c47;
	letter-spacing: 0.05px;
`;

const GroupName = styled.span`
	margin-left: 19px;
`;

const GroupCount = styled.span`
	margin-left: auto;
	color: #7b8a95;
`;

const ScrollThumb = styled.div`
	width: 12px;
	height: 495px;
	margin-top: 5px;
	border-radius: 5px;
	background: #d8d8e4;
`;

const TableWrapper = styled.div`
	position: relative;
	flex: 1;
	min-width: 0;
`;

const rowColumns = css`
	display: grid;
	grid-template-columns: 709px 200.4px 200.1px 148.5px 200.3px 201px 200.2px 128px;
`;

const Cell = styled.div`
	display: flex;
	align-items: center;
	justify-content: ${(props) => props.$align || 'flex-start'};
	gap: ${(props) => props.$gap || 0}px;
	min-width: 0;
	padding: 0 ${(props) => props.$padRight || 0}px 0 ${(props) => props.$pad || 0}px;
	border-right: 2px solid #f2f3f7;
	white-space: nowrap;

	&:last-child {
		border-right: 0;
	}
`;

const TableHead = styled.div`
	${rowColumns}
	height: 83px;
	border-bottom: 3px solid ${colors.blueLine};
	background: #fafafc;
	color: ${colors.slate};
	font-size: 16.4px;
	font-weight: 700;
	letter-spacing: 0.6px;
	text-transform: uppercase;

	${Cell} {
		padding-top: 3px;
	}
`;

const TableRow = styled.div`
	${rowColumns}
	height: 62.3px;
	border-bottom: 2px solid #f2f3f7;
	background: ${(props) => (props.$striped ? '#fafafc' : '#fff')};
	color: #22272f;

	${(props) =>
		props.$first &&
		css`
			border-bottom: 3px solid ${colors.blueLine};
			background: #f4f7fc;
		`}
`;

const Checkbox = styled.i`
	flex: none;
	width: 23px;
	height: 23px;
	border: 2.5px solid #22272f;
	border-radius: 3px;
	background: #fff;
`;

const KeywordLink = styled.a`
	margin-left: -2.5px;
	color: ${colors.link};
	letter-spacing: -0.02px;
`;

const Empty = styled.span`
	font-size: 21px;
	line-height: 30px;
	color: #4b5058;
	transform: scaleX(1.35);
	transform-origin: right;
`;

const Difficulty = styled.div`
	display: flex;
	align-items: center;
	justify-content: flex-end;
	gap: 11px;
	width: 71px;
	height: 36px;
	padding-right: 12.5px;
	border: 1.5px solid ${(props) => (props.$easy ? '#41b883' : '#a5e878')};
	border-radius: 5px;
	background: #fff;
`;

const DifficultyDot = styled.i`
	width: 9px;
	height: 9px;
	border-radius: 50%;
	background: ${(props) => (props.$easy ? '#38b481' : '#89e548')};
`;

const Intent = styled.span`
	width: 30px;
	height: 30px;
	border-radius: 6px;
	background: #d2e5f6;
	color: #1d5a9e;
	font-size: 16px;
	line-height: 31px;
	font-weight: 700;
	text-align: center;
`;

const TableHighlight = styled.div`
	position: absolute;
	top: 0;
	left: -8px;
	right: -3px;
	height: 829px;
	border: 6px solid ${colors.red};
	border-radius: 3px;
`;

const ChatButton = styled.div`
	position: absolute;
	top: 1315px;
	left: 2439px;
	display: flex;
	justify-content: center;
	width: 95px;
	height: 95px;
	padding-top: 34px;
	border-radius: 50%;
	background: #006bff;
	box-shadow: 0 12px 36px rgba(0, 0, 0, 0.16);
`;
